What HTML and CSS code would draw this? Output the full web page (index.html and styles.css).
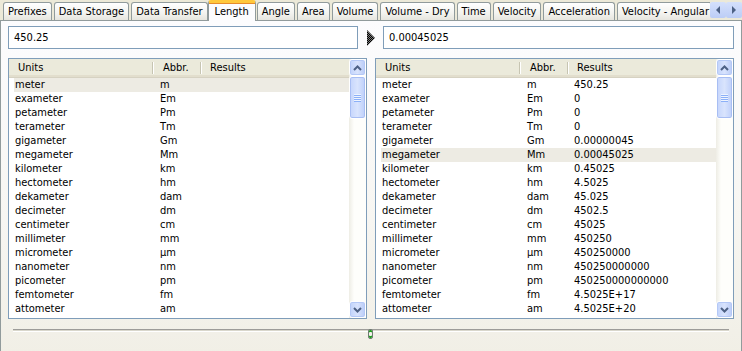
FILE: index.html
```html
<!DOCTYPE html>
<html lang="en">
<head>
    <meta charset="UTF-8">
    <title>Unit Converter - Length</title>
    <link rel="stylesheet" href="styles.css">
</head>
<body>
    <div class="window">
        <div class="tabstrip">
            <div class="tabs">
                <span class="tab">Prefixes</span>
                <span class="tab">Data Storage</span>
                <span class="tab">Data Transfer</span>
                <span class="tab active">Length</span>
                <span class="tab">Angle</span>
                <span class="tab">Area</span>
                <span class="tab">Volume</span>
                <span class="tab">Volume - Dry</span>
                <span class="tab">Time</span>
                <span class="tab">Velocity</span>
                <span class="tab">Acceleration</span>
                <span class="tab last">Velocity - Angular</span>
            </div>
            <div class="tab-scroll">
                <span class="tsb"><svg width="6" height="8" viewBox="0 0 6 8"><polygon points="5,0 1,4 5,8" fill="#4d6185"/></svg></span>
                <span class="tsb"><svg width="6" height="8" viewBox="0 0 6 8"><polygon points="1,0 5,4 1,8" fill="#4d6185"/></svg></span>
            </div>
        </div>

        <div class="page">
            <div class="inputs">
                <div class="field">450.25</div>
                <div class="go">
                    <svg width="8" height="16" viewBox="0 0 8 16">
                        <defs>
                            <pattern id="dither" width="2" height="2" patternUnits="userSpaceOnUse">
                                <rect width="2" height="2" fill="#7a7a7a"/>
                                <rect width="1" height="1" fill="#000"/>
                                <rect x="1" y="1" width="1" height="1" fill="#000"/>
                            </pattern>
                        </defs>
                        <polygon points="0,0 8,8 0,16" fill="url(#dither)"/>
                    </svg>
                </div>
                <div class="field">0.00045025</div>
            </div>

            <div class="lists">
                <div class="list">
                    <div class="list-main">
                        <div class="list-head">
                            <span class="hcell c-units">Units</span>
                            <span class="hcell c-abbr">Abbr.</span>
                            <span class="hcell c-res">Results</span>
                        </div>
                        <div class="rows">
                            <div class="row selected"><span>meter</span><span>m</span><span></span></div>
                            <div class="row"><span>exameter</span><span>Em</span><span></span></div>
                            <div class="row"><span>petameter</span><span>Pm</span><span></span></div>
                            <div class="row"><span>terameter</span><span>Tm</span><span></span></div>
                            <div class="row"><span>gigameter</span><span>Gm</span><span></span></div>
                            <div class="row"><span>megameter</span><span>Mm</span><span></span></div>
                            <div class="row"><span>kilometer</span><span>km</span><span></span></div>
                            <div class="row"><span>hectometer</span><span>hm</span><span></span></div>
                            <div class="row"><span>dekameter</span><span>dam</span><span></span></div>
                            <div class="row"><span>decimeter</span><span>dm</span><span></span></div>
                            <div class="row"><span>centimeter</span><span>cm</span><span></span></div>
                            <div class="row"><span>millimeter</span><span>mm</span><span></span></div>
                            <div class="row"><span>micrometer</span><span>µm</span><span></span></div>
                            <div class="row"><span>nanometer</span><span>nm</span><span></span></div>
                            <div class="row"><span>picometer</span><span>pm</span><span></span></div>
                            <div class="row"><span>femtometer</span><span>fm</span><span></span></div>
                            <div class="row"><span>attometer</span><span>am</span><span></span></div>
                        </div>
                    </div>
                    <div class="scrollbar">
                        <span class="sb-btn"><svg width="9" height="6" viewBox="0 0 9 6"><polyline points="1,5 4.5,1.5 8,5" fill="none" stroke="#4d6185" stroke-width="2"/></svg></span>
                        <span class="sb-thumb"><i></i><i></i><i></i><i></i></span>
                        <span class="sb-track"></span>
                        <span class="sb-btn"><svg width="9" height="6" viewBox="0 0 9 6"><polyline points="1,1 4.5,4.5 8,1" fill="none" stroke="#4d6185" stroke-width="2"/></svg></span>
                    </div>
                </div>

                <div class="list">
                    <div class="list-main">
                        <div class="list-head">
                            <span class="hcell c-units">Units</span>
                            <span class="hcell c-abbr">Abbr.</span>
                            <span class="hcell c-res">Results</span>
                        </div>
                        <div class="rows">
                            <div class="row"><span>meter</span><span>m</span><span>450.25</span></div>
                            <div class="row"><span>exameter</span><span>Em</span><span>0</span></div>
                            <div class="row"><span>petameter</span><span>Pm</span><span>0</span></div>
                            <div class="row"><span>terameter</span><span>Tm</span><span>0</span></div>
                            <div class="row"><span>gigameter</span><span>Gm</span><span>0.00000045</span></div>
                            <div class="row selected"><span>megameter</span><span>Mm</span><span>0.00045025</span></div>
                            <div class="row"><span>kilometer</span><span>km</span><span>0.45025</span></div>
                            <div class="row"><span>hectometer</span><span>hm</span><span>4.5025</span></div>
                            <div class="row"><span>dekameter</span><span>dam</span><span>45.025</span></div>
                            <div class="row"><span>decimeter</span><span>dm</span><span>4502.5</span></div>
                            <div class="row"><span>centimeter</span><span>cm</span><span>45025</span></div>
                            <div class="row"><span>millimeter</span><span>mm</span><span>450250</span></div>
                            <div class="row"><span>micrometer</span><span>µm</span><span>450250000</span></div>
                            <div class="row"><span>nanometer</span><span>nm</span><span>450250000000</span></div>
                            <div class="row"><span>picometer</span><span>pm</span><span>450250000000000</span></div>
                            <div class="row"><span>femtometer</span><span>fm</span><span>4.5025E+17</span></div>
                            <div class="row"><span>attometer</span><span>am</span><span>4.5025E+20</span></div>
                        </div>
                    </div>
                    <div class="scrollbar">
                        <span class="sb-btn"><svg width="9" height="6" viewBox="0 0 9 6"><polyline points="1,5 4.5,1.5 8,5" fill="none" stroke="#4d6185" stroke-width="2"/></svg></span>
                        <span class="sb-thumb"><i></i><i></i><i></i><i></i></span>
                        <span class="sb-track"></span>
                        <span class="sb-btn"><svg width="9" height="6" viewBox="0 0 9 6"><polyline points="1,1 4.5,4.5 8,1" fill="none" stroke="#4d6185" stroke-width="2"/></svg></span>
                    </div>
                </div>
            </div>

            <div class="slider">
                <div class="track"></div>
                <span class="thumb"></span>
            </div>
        </div>
    </div>
</body>
</html>
```

FILE: styles.css
```css
html, body {
    margin: 0;
    padding: 0;
}
body {
    background: #ece9d8;
    font-family: "DejaVu Sans", "Liberation Sans", sans-serif;
    font-stretch: condensed;
    font-size: 11px;
    color: #000;
    width: 742px;
    height: 351px;
    overflow: hidden;
}
.window {
    width: 742px;
}

/* tab strip */
.tabstrip {
    display: flex;
    height: 21px;
    position: relative;
    z-index: 1;
}
.tabs {
    flex: 1;
    display: flex;
    align-items: flex-end;
    overflow: hidden;
    padding-left: 3px;
    gap: 2px;
    min-width: 0;
}
.tab {
    flex: none;
    height: 17px;
    line-height: 17px;
    padding: 0 4px;
    border: 1px solid #919b9c;
    border-bottom: none;
    border-radius: 3px 3px 0 0;
    background: linear-gradient(#ffffff, #f3f3ef 60%, #e6e5de);
    white-space: nowrap;
    margin-bottom: 1px;
}
.tab.last {
    padding-right: 2px;
}
.tab.active {
    margin: 0 -1px 0 -2px;
    padding: 0 6px;
    line-height: 18px;
    height: 18px;
    background: #fcfcfe;
    border-top: 3px solid #ffc83c;
    box-shadow: inset 0 1px 0 #e68b2c;
    position: relative;
    z-index: 2;
}
.tab-scroll {
    flex: none;
    display: flex;
    padding-top: 2px;
    height: 16px;
}
.tsb {
    width: 16px;
    height: 16px;
    display: flex;
    align-items: center;
    justify-content: center;
    background: linear-gradient(#d4e0fc, #bccdf6);
    border-radius: 2px;
}

/* tab page */
.page {
    margin-top: -1px;
    height: 327px;
    border: 1px solid #919b9c;
    background: linear-gradient(#fcfcfe, #f7f6f2 60%, #f1efe6);
    padding: 5px 7px 0 7px;
}
.inputs {
    display: flex;
    height: 23px;
}
.field {
    width: 340px;
    height: 21px;
    line-height: 21px;
    border: 1px solid #7f9db9;
    background: #fff;
    padding-left: 5px;
    padding-right: 4px;
}
.field:last-child {
    width: 341px;
}
.go {
    width: 25px;
    display: flex;
    align-items: center;
    padding-left: 9px;
    box-sizing: border-box;
}

/* lists */
.lists {
    display: flex;
    gap: 8px;
    margin-top: 9px;
}
.list {
    width: 357px;
    height: 259px;
    border: 1px solid #7f9db9;
    background: #fff;
    display: flex;
}
.list-main {
    flex: 1;
    min-width: 0;
}
.list-head {
    display: grid;
    grid-template-columns: 144px 48px 1fr;
    height: 18px;
    background: #ebeadb;
    border-bottom: 1px solid #d6d2c2;
    box-shadow: inset 0 -2px 0 #e2decd;
}
.hcell {
    position: relative;
    line-height: 18px;
    padding-left: 9px;
}
.hcell.c-abbr {
    padding-left: 10px;
}
.hcell.c-units::after,
.hcell.c-abbr::after {
    content: "";
    position: absolute;
    right: 0;
    top: 3px;
    bottom: 3px;
    width: 1px;
    background: #c7c5b2;
    box-shadow: 1px 0 0 #fff;
}
.row {
    display: grid;
    grid-template-columns: 139px 48px 1fr;
    height: 14px;
    line-height: 14px;
    margin-left: 5px;
    white-space: nowrap;
}
.row span {
    padding-left: 6px;
}
.row span:first-child {
    padding-left: 1px;
}
.row span:nth-child(2) {
    padding-left: 7px;
}
.row.selected {
    background: #edebe3;
}

/* scrollbar */
.scrollbar {
    flex: none;
    width: 17px;
    display: flex;
    flex-direction: column;
    background: linear-gradient(90deg, #eeede5, #fefefb 30%, #fefefb);
}
.sb-btn {
    height: 17px;
    box-sizing: border-box;
    display: flex;
    align-items: center;
    justify-content: center;
    border: 1px solid #fff;
    border-radius: 3px;
    background: linear-gradient(90deg, #c1d3fb, #d8e3fd 50%, #b9cbf7);
    box-shadow: inset 0 0 0 1px #b4c8f6;
}
.sb-thumb {
    height: 43px;
    box-sizing: border-box;
    border: 1px solid #fff;
    border-radius: 3px;
    background: linear-gradient(90deg, #c5d5fc, #d9e4fd 50%, #bdcffa);
    box-shadow: inset 0 0 0 1px #a8bef3;
    display: flex;
    flex-direction: column;
    align-items: center;
    justify-content: center;
    gap: 1px;
}
.sb-thumb i {
    display: block;
    width: 7px;
    height: 1px;
    background: #eef4fe;
    box-shadow: 0 1px 0 #8cb0f8;
}
.sb-track {
    flex: 1;
}

/* slider */
.slider {
    position: relative;
    margin: 10px 5px 0 5px;
    height: 12px;
}
.track {
    margin-top: 3px;
    height: 1px;
    border-top: 1px solid #9d9c99;
    border-bottom: 1px solid #fff;
    background: #d9d7cc;
}
.thumb {
    position: absolute;
    left: calc(50% - 3px);
    top: 0;
    width: 3px;
    height: 8px;
    border: 1px solid #6f7b72;
    border-radius: 2px;
    background: #f3f2ec;
    box-shadow: inset 0 2px 0 #21a121, inset 0 -2px 0 #21a121;
}
```
